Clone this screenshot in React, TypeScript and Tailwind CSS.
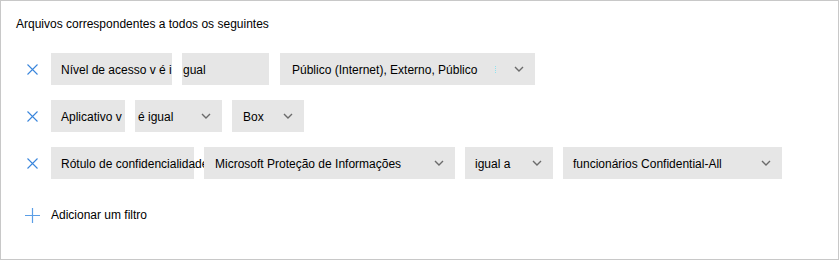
const Chevron = () => (
  <svg width="10" height="6" viewBox="0 0 10 6" className="shrink-0">
    <path d="M1 1 L5 5 L9 1" fill="none" stroke="#6b6b6b" strokeWidth="1.4" />
  </svg>
)

const RemoveIcon = () => (
  <div className="w-[35px] pl-[11px] flex items-center shrink-0">
    <svg width="11" height="11" viewBox="0 0 11 11">
      <path d="M0.5 0.5 L10.5 10.5 M10.5 0.5 L0.5 10.5" stroke="#3a86dc" strokeWidth="1.1" />
    </svg>
  </div>
)

type BoxProps = {
  width: string
  text: string
  pl?: string
  chevron?: boolean
  mark?: boolean
  extra?: string
}

const Box = ({ width, text, pl = "pl-[10px]", chevron, mark, extra = "" }: BoxProps) => (
  <div className={`h-[32px] bg-[#e6e6e6] flex items-center shrink-0 ${width} ${pl} ${chevron ? "pr-[11px]" : ""} ${extra}`}>
    <span className="whitespace-nowrap flex-1 overflow-visible pt-[2px]">{text}</span>
    {mark && <span className="w-[1px] h-[7px] mr-[18px] border-l border-dotted border-[#8fe3ef]" />}
    {chevron && <Chevron />}
  </div>
)

const App = () => {
  return (
    <div
      className="w-[839px] h-[260px] border border-[#c8c8c8] bg-white pt-[15px] text-[12px] text-black flex flex-col"
      style={{ fontFamily: '"Liberation Sans", Arial, sans-serif' }}
    >
      <div className="pl-[15px] leading-[16px]">Arquivos correspondentes a todos os seguintes</div>

      <div className="mt-[21px] pl-[15px] flex flex-col gap-[15px]">
        <div className="flex items-center">
          <RemoveIcon />
          <div className="flex gap-[10px]">
            <Box width="w-[121px]" text="Nível de acesso v é i" />
            <Box width="w-[87px]" text="gual" pl="pl-[1px]" />
            <Box width="w-[255px]" text="Público (Internet), Externo, Público" pl="pl-[12px]" chevron mark extra="ml-[1px]" />
          </div>
        </div>

        <div className="flex items-center">
          <RemoveIcon />
          <div className="flex gap-[10px]">
            <Box width="w-[74px]" text="Aplicativo v" />
            <Box width="w-[87px]" text="é igual" pl="pl-[3px]" chevron />
            <Box width="w-[72px]" text="Box" pl="pl-[11px]" chevron />
          </div>
        </div>

        <div className="flex items-center">
          <RemoveIcon />
          <div className="flex gap-[10px]">
            <Box width="w-[143px]" text="Rótulo de confidencialidade" />
            <Box width="w-[251px]" text="Microsoft Proteção de Informações" pl="pl-[11px]" chevron />
            <Box width="w-[88px]" text="igual a" pl="pl-[10px]" chevron />
            <Box width="w-[219px]" text="funcionários Confidential-All" pl="pl-[10px]" chevron />
          </div>
        </div>
      </div>

      <div className="mt-[26px] h-[20px] flex items-center">
        <div className="w-[50px] pl-[24px] flex items-center">
          <svg width="15" height="15" viewBox="0 0 15 15">
            <path d="M7.5 0 V15 M0 7.5 H15" stroke="#5b9ee6" strokeWidth="1.2" />
          </svg>
        </div>
        <span>Adicionar um filtro</span>
      </div>
    </div>
  )
}

export default App
